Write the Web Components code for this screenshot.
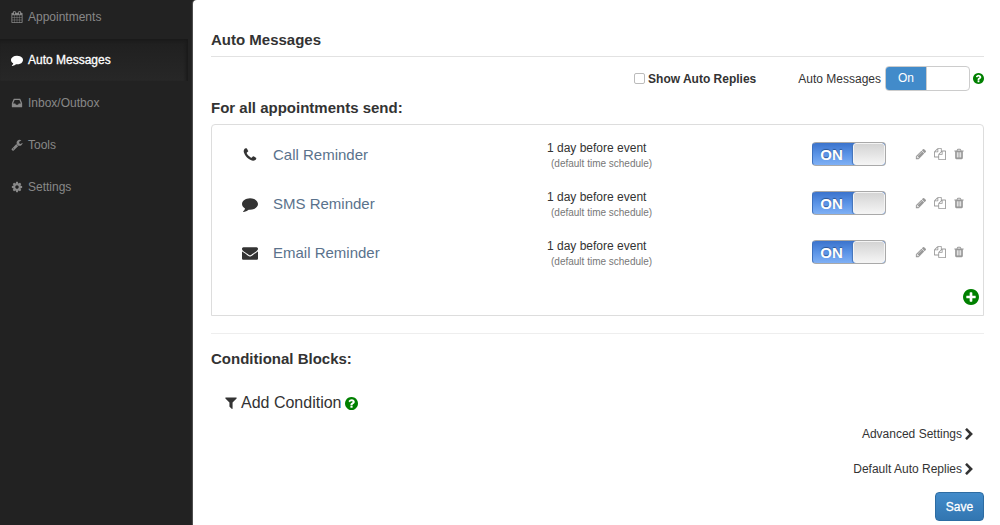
<!DOCTYPE html>
<html lang="en">
<head>
<meta charset="utf-8">
<meta name="viewport" content="width=device-width, initial-scale=1">
<title>Auto Messages</title>
<style>
  body { margin: 0; background: #222; color: #333; font: 12px/20px "Liberation Sans", Arial, sans-serif; }
</style>
</head>
<body>
<app-shell>
  <side-nav slot="nav">
    <nav-item icon="calendar">Appointments</nav-item>
    <nav-item icon="comment" active>Auto Messages</nav-item>
    <nav-item icon="inbox">Inbox/Outbox</nav-item>
    <nav-item icon="wrench">Tools</nav-item>
    <nav-item icon="cog">Settings</nav-item>
  </side-nav>
  <messages-page></messages-page>
</app-shell>

<script>
const DISC = 'M1664 896q0 209-103 385.5t-279.5 279.5-385.5 103-385.5-103-279.5-279.5-103-385.5 103-385.5 279.5-279.5 385.5-103 385.5 103 279.5 279.5 103 385.5z';
const SLOT = 'v-704q0-14-9-23t-23-9h-64q-14 0-23 9t-9 23v704q0 14 9 23t23 9h64q14 0 23-9t9-23z';
const FULL = '0 0 1792 1792';
const ICONS = {
  calendar: [FULL, 'M192 1664h288v-288h-288v288zm352 0h320v-288h-320v288zm-352-352h288v-320h-288v320zm352 0h320v-320h-320v320zm-352-384h288v-288h-288v288zm736 736h320v-288h-320v288zm-384-736h320v-288h-320v288zm768 736h288v-288h-288v288zm-384-352h320v-320h-320v320zm-352-864v-288q0-13-9.5-22.5t-22.5-9.5h-64q-13 0-22.5 9.5t-9.5 22.5v288q0 13 9.5 22.5t22.5 9.5h64q13 0 22.5-9.5t9.5-22.5zm736 864h288v-320h-288v320zm-384-384h320v-288h-320v288zm384 0h288v-288h-288v288zm32-480v-288q0-13-9.5-22.5t-22.5-9.5h-64q-13 0-22.5 9.5t-9.5 22.5v288q0 13 9.5 22.5t22.5 9.5h64q13 0 22.5-9.5t9.5-22.5zm384-64v1280q0 52-38 90t-90 38h-1408q-52 0-90-38t-38-90v-1280q0-52 38-90t90-38h128v-96q0-66 47-113t113-47h64q66 0 113 47t47 113v96h384v-96q0-66 47-113t113-47h64q66 0 113 47t47 113v96h128q52 0 90 38t38 90z'],
  comment: [FULL, 'M1792 896q0 174-120 321.5t-326 233-450 85.5q-70 0-145-8-198 175-460 242-49 14-114 22-17 2-30.5-9t-17.5-29v-1q-3-4-.5-12t2-10 4.5-9.5l6-9 7-8.5 8-9q7-8 31-34.5t34.5-38 31-39.5 32.5-51 27-59 26-76q-157-89-247.5-220t-90.5-281q0-130 71-248.5t191-204.5 286-136.5 348-50.5q244 0 450 85.5t326 233 120 321.5z'],
  inbox: ['0 0 1536 1792', 'M1023 960h316q-1-3-2.5-8.5t-2.5-7.5l-212-496h-708l-212 496q-1 3-2.5 8.5t-2.5 7.5h316l95 192h320zm513 30v482q0 26-19 45t-45 19h-1408q-26 0-45-19t-19-45v-482q0-62 25-123l238-552q10-25 36.5-42t52.5-17h832q26 0 52.5 17t36.5 42l238 552q25 61 25 123z'],
  wrench: [FULL, 'M448 1472q0-26-19-45t-45-19-45 19-19 45 19 45 45 19 45-19 19-45zm644-420l-682 682q-37 37-90 37-52 0-91-37l-106-108q-38-36-38-90 0-53 38-91l681-681q39 98 114.5 173.5t173.5 114.5zm634-435q0 39-23 106-47 134-164.5 217.5t-258.5 83.5q-185 0-316.5-131.5t-131.5-316.5 131.5-316.5 316.5-131.5q58 0 121.5 16.5t107.5 46.5q16 11 16 28t-16 28l-293 169v224l193 107q5-3 79-48.5t135.5-81 70.5-35.5q15 0 23.5 10t8.5 25z'],
  cog: [FULL, 'M1152 896q0-106-75-181t-181-75-181 75-75 181 75 181 181 75 181-75 75-181zm512-109v222q0 12-8 23t-20 13l-185 28q-19 54-39 91 35 50 107 138 10 12 10 25t-9 23q-27 37-99 108t-94 71q-12 0-26-9l-138-108q-44 23-91 38-16 136-29 186-7 28-36 28h-222q-14 0-24.5-8.5t-11.5-21.5l-28-184q-49-16-90-37l-141 107q-10 9-25 9-14 0-25-11-126-114-165-168-7-10-7-23 0-12 8-23 15-21 51-66.5t54-70.5q-27-50-41-99l-183-27q-13-2-21-12.5t-8-23.5v-222q0-12 8-23t19-13l186-28q14-46 39-92-40-57-107-138-10-12-10-24 0-10 9-23 26-36 98.5-107.5t94.5-71.5q13 0 26 10l138 107q44-23 91-38 16-136 29-186 7-28 36-28h222q14 0 24.5 8.5t11.5 21.5l28 184q49 16 90 37l142-107q9-9 24-9 13 0 25 10 129 119 165 170 7 8 7 22 0 12-8 23-15 21-51 66.5t-54 70.5q26 50 41 98l183 28q13 2 21 12.5t8 23.5z'],
  phone: [FULL, 'M1600 1240q0 27-10 70.5t-21 68.5q-21 50-122 106-94 51-186 51-27 0-52.5-3.5t-57.5-12.5-47.5-14.5-55.5-20.5-49-18q-98-35-175-83-128-79-264.5-215.5t-215.5-264.5q-48-77-83-175-3-9-18-49t-20.5-55.5-14.5-47.5-12.5-57.5-3.5-52.5q0-92 51-186 56-101 106-122 25-11 68.5-21t70.5-10q14 0 21 3 18 6 53 76 11 19 30 54t35 63.5 31 53.5q3 4 17.5 25t21.5 35.5 7 28.5q0 20-28.5 50t-62 55-62 53-28.5 46q0 9 5 22.5t8.5 20.5 14 24 11.5 19q76 137 174 235t235 174q2 1 19 11.5t24 14 20.5 8.5 22.5 5q18 0 46-28.5t53-62 55-62 50-28.5q14 0 28.5 7t35.5 21.5 25 17.5q25 15 53.5 31t63.5 35 54 30q70 35 76 53 3 7 3 21z'],
  envelope: [FULL, 'M1792 710v794q0 66-47 113t-113 47h-1472q-66 0-113-47t-47-113v-794q44 49 101 87 362 246 497 345 57 42 92.5 65.5t94.5 48 110 24.5h2q51 0 110-24.5t94.5-48 92.5-65.5q170-123 498-345 57-39 100-87zm0-294q0 79-49 151t-122 123q-376 261-468 325-10 7-42.5 31t-54 38.5-52 32.5-57.5 27-50 9h-2q-23 0-50-9t-57.5-27-52-32.5-54-38.5-42.5-31q-91-64-262-182.5t-205-142.5q-62-42-117-115.5t-55-136.5q0-78 41.5-130t118.5-52h1472q65 0 112.5 47t47.5 113z'],
  pencil: [FULL, 'M491 1536l91-91-235-235-91 91v107h128v128h107zm523-928q0-22-22-22-10 0-17 7l-542 542q-7 7-7 17 0 22 22 22 10 0 17-7l542-542q7-7 7-17zm-54-192l416 416-832 832h-416v-416zm683 96q0 53-37 90l-166 166-416-416 166-165q36-38 90-38 53 0 91 38l235 234q37 39 37 91z'],
  copy: [FULL, 'M1696 384q40 0 68 28t28 68v1216q0 40-28 68t-68 28h-960q-40 0-68-28t-28-68v-288h-544q-40 0-68-28t-28-68v-672q0-40 20-88t48-76l408-408q28-28 76-48t88-20h416q40 0 68 28t28 68v328q68-40 128-40h416zm-544 213l-299 299h299v-299zm-640-384l-299 299h299v-299zm196 647l316-316v-416h-384v416q0 40-28 68t-68 28h-416v640h512v-256q0-40 20-88t48-76zm956 804v-1152h-384v416q0 40-28 68t-68 28h-416v640h896z'],
  trash: [FULL, 'M704 1376' + SLOT + 'M960 1376' + SLOT + 'M1216 1376' + SLOT + 'M672 384h448l-48-117q-7-9-17-11h-317q-10 2-17 11zm928 32v64q0 14-9 23t-23 9h-96v948q0 83-47 143.5t-113 60.5h-832q-66 0-113-58.5t-47-141.5v-952h-96q-14 0-23-9t-9-23v-64q0-14 9-23t23-9h309l70-167q15-37 54-63t79-26h320q40 0 79 26t54 63l70 167h309q14 0 23 9t9 23z'],
  plus: ['128 128 1536 1536', 'M1344 960v-128q0-26-19-45t-45-19h-256v-256q0-26-19-45t-45-19h-128q-26 0-45 19t-19 45v256h-256q-26 0-45 19t-19 45v128q0 26 19 45t45 19h256v256q0 26 19 45t45 19h128q26 0 45-19t19-45v-256h256q26 0 45-19t19-45z' + DISC],
  question: ['128 128 1536 1536', 'M1024 1376v-192q0-14-9-23t-23-9h-192q-14 0-23 9t-9 23v192q0 14 9 23t23 9h192q14 0 23-9t9-23zm256-672q0-88-55.5-163t-138.5-116-170-41q-243 0-371 213-15 24 8 42l132 100q7 6 19 6 16 0 25-12 53-68 86-92 34-24 86-24 48 0 85.5 26t37.5 59q0 38-20 61t-68 45q-63 28-115.5 86.5t-52.5 125.5v36q0 14 9 23t23 9h192q14 0 23-9t9-23q0-19 21.5-49.5t54.5-49.5q32-18 49-28.5t46-35 44.5-48 28-60.5 12.5-81z' + DISC],
  filter: ['192 192 1408 1472', 'M1595 295q17 41-14 70l-493 493v742q0 42-39 59-13 5-25 5-27 0-45-19l-256-256q-19-19-19-45v-486l-493-493q-31-29-14-70 17-39 59-39h1280q42 0 59 39z'],
  chevron: ['346 20 1036 1624', 'M1363 877l-742 742q-19 19-45 19t-45-19l-166-166q-19-19-19-45t19-45l531-531-531-531q-19-19-19-45t19-45l166-166q19-19 45-19t45 19l742 742q19 19 19 45t-19 45z'],
};

/* Base class: renders the subclass's markup into an open shadow root. */
class Part extends HTMLElement {
  connectedCallback() {
    if (this.shadowRoot) return;
    const t = document.createElement('template');
    t.innerHTML = this.render();
    this.attachShadow({ mode: 'open' }).append(t.content.cloneNode(true));
  }
}

customElements.define('fa-icon', class extends Part {
  render() {
    const [box, d] = ICONS[this.getAttribute('name')];
    return `<style>
      :host { display: block; flex: none; width: 12px; height: 12px; }
      svg { display: block; width: 100%; height: 100%; fill: currentColor; }
    </style><svg viewBox="${box}" aria-hidden="true"><path fill-rule="evenodd" d="${d}"/></svg>`;
  }
});

customElements.define('app-shell', class extends Part {
  render() {
    return `<style>
      :host { display: grid; grid-template-columns: 193px minmax(0, 1fr); min-height: 100vh; }
      main { background: #fff; border-radius: 4px 0 0 0; box-shadow: -1px 0 1px #555; padding: 29px 16px 4px 18px; }
    </style><slot name="nav"></slot><main><slot></slot></main>`;
  }
});

customElements.define('side-nav', class extends Part {
  render() {
    return `<style>
      :host { display: block; padding-right: 5px; }
      nav { display: flex; flex-direction: column; margin-top: -4px; }
    </style><nav aria-label="Main"><slot></slot></nav>`;
  }
});

customElements.define('nav-item', class extends Part {
  render() {
    return `<style>
      :host { display: block; }
      :host([active]) { margin: 1px 0; }
      a { display: flex; align-items: center; gap: 5px; height: 42px; padding-left: 11px; color: #888; text-decoration: none; }
      :host([active]) a { color: #fff; -webkit-text-stroke: .3px #fff; background: linear-gradient(#1f1f1f, #272727); box-shadow: inset -2px 2px 3px #1a1a1a; }
    </style><a href="#" ${this.hasAttribute('active') ? 'aria-current="page"' : ''}><fa-icon name="${this.getAttribute('icon')}"></fa-icon><span><slot></slot></span></a>`;
  }
});

customElements.define('plain-switch', class extends Part {
  render() {
    return `<style>
      :host { display: block; }
      label { display: flex; align-items: center; gap: 4px; }
      input { position: absolute; opacity: 0; margin: 0; }
      .track { display: flex; box-sizing: border-box; width: 85px; height: 25px; border: 1px solid #ccc; border-radius: 4px; overflow: hidden; background: #fff; }
      .on { width: 40px; background: #428bca; color: #fff; line-height: 23px; text-align: center; border-right: 1px solid #ccc; }
      input:focus-visible + .track { outline: 2px solid #66afe9; }
    </style><label><slot></slot><input type="checkbox" role="switch" checked><span class="track"><span class="on">On</span></span></label>`;
  }
});

customElements.define('glossy-switch', class extends Part {
  render() {
    return `<style>
      :host { display: block; }
      label { display: flex; box-sizing: border-box; width: 74px; height: 24px; border: 1px solid #a9a9a9; border-left-color: #3d70bd; border-radius: 4px; overflow: hidden; background: linear-gradient(#3b73cc, #5a93e6 50%, #7fb0f5); }
      input { position: absolute; opacity: 0; margin: 0; }
      .on { flex: 1; padding-right: 3px; color: #fff; font-size: 15px; font-weight: bold; line-height: 23px; text-align: center; text-shadow: 0 -1px 1px #2a5494; }
      .knob { width: 32px; border: 1px solid #f4f4f4; border-radius: 3px; background: linear-gradient(#d4d4d4, #f4f4f4); box-shadow: -1px 0 1px #4474b8; box-sizing: border-box; }
    </style><label><input type="checkbox" role="switch" checked aria-label="${this.getAttribute('label')}"><span class="on">ON</span><span class="knob"></span></label>`;
  }
});

customElements.define('reminder-row', class extends Part {
  render() {
    return `<style>
      :host { display: grid; grid-template-columns: 61px minmax(0, 274fr) minmax(0, 265fr) 171px; align-items: center; height: 49px; }
      .icon { width: 16px; height: 16px; margin-left: 30px; }
      .name { color: #5a728c; font-size: 15px; text-decoration: none; }
      .when { line-height: 15px; padding-top: 3px; }
      small { display: block; padding-left: 4px; color: #777; font-size: 10px; }
      .tools { display: flex; align-items: center; gap: 29px; padding-bottom: 2px; }
      .actions { display: flex; gap: 7px; color: #999; }
      button { padding: 0; border: 0; background: none; color: inherit; cursor: pointer; }
    </style>
    <fa-icon class="icon" name="${this.getAttribute('icon')}"></fa-icon>
    <a class="name" href="#"><slot></slot></a>
    <div class="when">1 day before event<small>(default time schedule)</small></div>
    <div class="tools"><glossy-switch label="Reminder enabled"></glossy-switch>
      <div class="actions">
        <button type="button" aria-label="Edit"><fa-icon name="pencil"></fa-icon></button>
        <button type="button" aria-label="Copy"><fa-icon name="copy"></fa-icon></button>
        <button type="button" aria-label="Delete"><fa-icon name="trash"></fa-icon></button>
      </div></div>`;
  }
});

customElements.define('more-link', class extends Part {
  render() {
    return `<style>
      :host { display: block; }
      a { display: flex; align-items: center; gap: 3px; color: #333; text-decoration: none; }
      fa-icon { width: 8px; height: 12px; }
    </style><a href="#"><span><slot></slot></span><fa-icon name="chevron"></fa-icon></a>`;
  }
});

customElements.define('messages-page', class extends Part {
  render() {
    return `<style>
      :host { display: block; }
      h1, h2 { margin: 0; font-size: 15px; line-height: 22px; font-weight: bold; }
      h1 { padding-bottom: 5px; border-bottom: 1px solid #e2e2e2; }
      .bar { display: flex; justify-content: flex-end; align-items: center; margin: 9px 0 6px; }
      .show { display: flex; align-items: center; gap: 3px; margin-right: 42px; font-weight: bold; }
      .show input { appearance: none; width: 11px; height: 11px; margin: 0; border: 1px solid #bbb; border-radius: 2px; background: #fff; }
      .show input:checked { background: #428bca; }
      .help { color: green; width: 11px; height: 11px; margin-left: 3px; }
      .panel { margin-top: 5px; padding: 5px 4px 10px 0; border: 1px solid #ddd; border-radius: 4px 4px 0 0; }
      reminder-row { margin-right: -4px; }
      .add { display: block; margin: 12px 0 0 auto; padding: 0; border: 0; background: none; color: green; cursor: pointer; }
      .add fa-icon { width: 16px; height: 16px; }
      hr { margin: 17px 0 14px; border: 0; border-top: 1px solid #eee; }
      .cond { display: flex; align-items: center; gap: 3px; margin: 22px 0 10px 14px; font-size: 16px; line-height: 22px; }
      .cond a { display: flex; align-items: center; gap: 4px; color: #333; text-decoration: none; }
      .cond fa-icon { width: 12px; height: 12px; }
      .cond .help { width: 13px; height: 13px; margin: 0; }
      .more { display: flex; flex-direction: column; align-items: flex-end; gap: 15px; padding-right: 11px; }
      .save { display: block; box-sizing: border-box; width: 49px; height: 29px; margin: 13px 0 0 auto; padding: 0; border: 1px solid #2d6ca2; border-radius: 4px; background: linear-gradient(#428bca, #3276b1); color: #fff; font: inherit; -webkit-text-stroke: .3px #fff; }
    </style>
    <h1>Auto Messages</h1>
    <div class="bar">
      <label class="show"><input type="checkbox">Show Auto Replies</label>
      <plain-switch>Auto Messages</plain-switch>
      <fa-icon class="help" name="question"></fa-icon>
    </div>
    <h2>For all appointments send:</h2>
    <section class="panel">
      <reminder-row icon="phone">Call Reminder</reminder-row>
      <reminder-row icon="comment">SMS Reminder</reminder-row>
      <reminder-row icon="envelope">Email Reminder</reminder-row>
      <button class="add" type="button" aria-label="Add reminder"><fa-icon name="plus"></fa-icon></button>
    </section>
    <hr>
    <h2>Conditional Blocks:</h2>
    <div class="cond"><a href="#"><fa-icon name="filter"></fa-icon><span>Add Condition</span></a><fa-icon class="help" name="question"></fa-icon></div>
    <div class="more"><more-link>Advanced Settings</more-link><more-link>Default Auto Replies</more-link></div>
    <button class="save" type="button">Save</button>`;
  }
});
</script>
</body>
</html>
